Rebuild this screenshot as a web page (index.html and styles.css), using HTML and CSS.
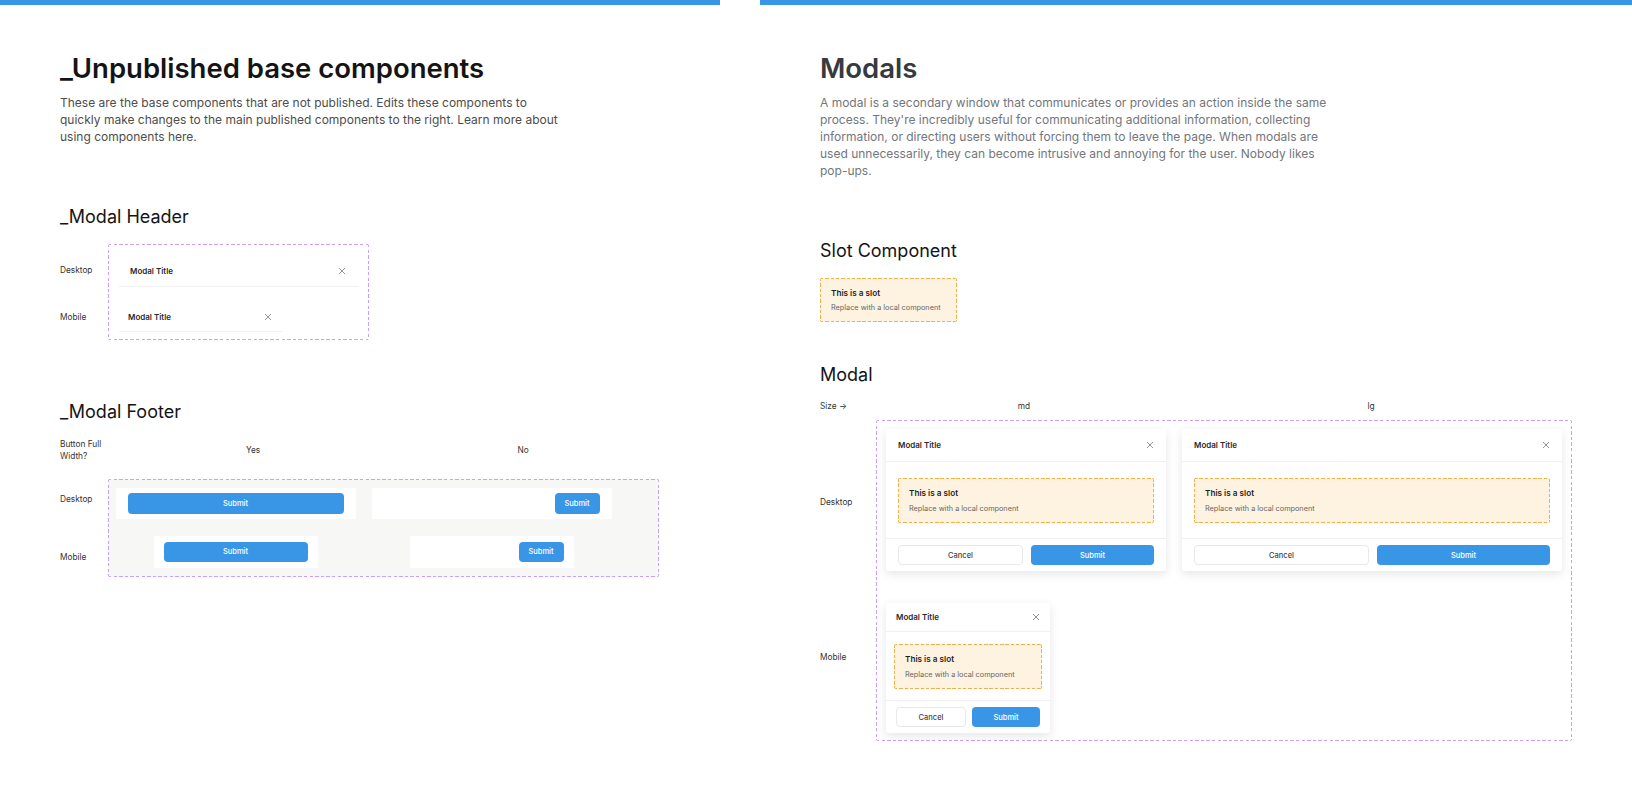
FILE: index.html
```html
<!DOCTYPE html>
<html>
<head>
    <title>Modals</title>
    <link rel="stylesheet" href="styles.css">
</head>
<body>
    <div class="panel panel-base">
        <div class="panel-body">
            <h1>_Unpublished base components</h1>
            <p class="intro">These are the base components that are not published. Edits these components to quickly make changes to the main published components to the right. Learn more about using components here.</p>

            <h2 class="header-heading">_Modal Header</h2>
            <div class="variant-row">
                <div class="labels header-labels">
                    <span>Desktop</span>
                    <span>Mobile</span>
                </div>
                <div class="variants header-variants">
                    <div class="base-header base-header-desktop">
                        <span class="modal-title">Modal Title</span>
                        <svg class="close" viewBox="0 0 8 8"><path d="M1 1l6 6M7 1l-6 6"/></svg>
                    </div>
                    <div class="base-header base-header-mobile">
                        <span class="modal-title">Modal Title</span>
                        <svg class="close" viewBox="0 0 8 8"><path d="M1 1l6 6M7 1l-6 6"/></svg>
                    </div>
                </div>
            </div>

            <h2 class="footer-heading">_Modal Footer</h2>
            <div class="footer-axis">
                <span class="axis-label">Button Full Width?</span>
                <span class="axis-yes">Yes</span>
                <span class="axis-no">No</span>
            </div>
            <div class="variant-row">
                <div class="labels footer-labels">
                    <span>Desktop</span>
                    <span>Mobile</span>
                </div>
                <div class="variants footer-variants">
                    <div class="footer-row">
                        <div class="base-footer base-footer-desktop"><button class="btn btn-primary btn-full">Submit</button></div>
                        <div class="base-footer base-footer-desktop"><button class="btn btn-primary btn-small">Submit</button></div>
                    </div>
                    <div class="footer-row footer-row-mobile">
                        <div class="base-footer base-footer-mobile"><button class="btn btn-primary btn-full">Submit</button></div>
                        <div class="base-footer base-footer-mobile"><button class="btn btn-primary btn-small">Submit</button></div>
                    </div>
                </div>
            </div>
        </div>
    </div>

    <div class="panel panel-modals">
        <div class="panel-body">
            <h1 class="muted-title">Modals</h1>
            <p class="intro intro-muted">A modal is a secondary window that communicates or provides an action inside the same process. They're incredibly useful for communicating additional information, collecting information, or directing users without forcing them to leave the page. When modals are used unnecessarily, they can become intrusive and annoying for the user. Nobody likes pop-ups.</p>

            <h2 class="slot-heading">Slot Component</h2>
            <div class="slot slot-standalone">
                <strong>This is a slot</strong>
                <span>Replace with a local component</span>
            </div>

            <h2 class="modal-heading">Modal</h2>
            <div class="size-axis">
                <span>Size →</span>
                <span class="size-md">md</span>
                <span class="size-lg">lg</span>
            </div>
            <div class="variant-row">
                <div class="labels modal-labels">
                    <span>Desktop</span>
                    <span>Mobile</span>
                </div>
                <div class="variants modal-variants">
                    <div class="modal-row">
                        <div class="modal modal-md">
                            <div class="modal-header">
                                <span class="modal-title">Modal Title</span>
                                <svg class="close" viewBox="0 0 8 8"><path d="M1 1l6 6M7 1l-6 6"/></svg>
                            </div>
                            <div class="modal-body">
                                <div class="slot">
                                    <strong>This is a slot</strong>
                                    <span>Replace with a local component</span>
                                </div>
                            </div>
                            <div class="modal-footer">
                                <button class="btn btn-outline">Cancel</button>
                                <button class="btn btn-primary">Submit</button>
                            </div>
                        </div>
                        <div class="modal modal-lg">
                            <div class="modal-header">
                                <span class="modal-title">Modal Title</span>
                                <svg class="close" viewBox="0 0 8 8"><path d="M1 1l6 6M7 1l-6 6"/></svg>
                            </div>
                            <div class="modal-body">
                                <div class="slot">
                                    <strong>This is a slot</strong>
                                    <span>Replace with a local component</span>
                                </div>
                            </div>
                            <div class="modal-footer">
                                <button class="btn btn-outline">Cancel</button>
                                <button class="btn btn-primary">Submit</button>
                            </div>
                        </div>
                    </div>
                    <div class="modal modal-mobile">
                        <div class="modal-header">
                            <span class="modal-title">Modal Title</span>
                            <svg class="close" viewBox="0 0 8 8"><path d="M1 1l6 6M7 1l-6 6"/></svg>
                        </div>
                        <div class="modal-body">
                            <div class="slot">
                                <strong>This is a slot</strong>
                                <span>Replace with a local component</span>
                            </div>
                        </div>
                        <div class="modal-footer">
                            <button class="btn btn-outline">Cancel</button>
                            <button class="btn btn-primary">Submit</button>
                        </div>
                    </div>
                </div>
            </div>
        </div>
    </div>
</body>
</html>
```

FILE: styles.css
```css
* {
    box-sizing: border-box;
}
html, body {
    height: 100%;
}
body {
    font-family: Inter, "Liberation Sans", sans-serif;
    margin: 0;
    background-color: #fff;
    color: #1a1a1a;
    display: flex;
    gap: 40px;
    overflow: hidden;
}
.panel {
    border-top: 5px solid #3996e6;
    height: 100%;
}
.panel-base {
    width: 720px;
}
.panel-modals {
    width: 872px;
}
.panel-body {
    padding: 46px 0 0 60px;
}
h1 {
    margin: 0;
    font-size: 27.5px;
    line-height: 34px;
    font-weight: 600;
    color: #141414;
}
.muted-title {
    color: #36393d;
}
.intro {
    margin: 9px 0 0;
    font-size: 12px;
    line-height: 17px;
    color: #4d4d4d;
    width: 510px;
}
.intro-muted {
    color: #73767c;
    width: 512px;
}
h2 {
    margin: 0;
    font-size: 18px;
    line-height: 22px;
    font-weight: 400;
    color: #141414;
}
.header-heading {
    margin-top: 61px;
    margin-bottom: 16px;
}
.footer-heading {
    margin-top: 61.5px;
    margin-bottom: 15px;
}
.slot-heading {
    margin-top: 60.5px;
    margin-bottom: 16.3px;
}
.modal-heading {
    margin-top: 41.5px;
    margin-bottom: 14.5px;
}

/* rows of variants */
.variant-row {
    display: flex;
}
.labels {
    display: flex;
    flex-direction: column;
    font-size: 8.3px;
    line-height: 12px;
    color: #333;
}
.header-labels {
    width: 48px;
    padding-top: 20px;
    gap: 35px;
}
.footer-labels {
    width: 48px;
    padding-top: 13.7px;
    gap: 46px;
}
.modal-labels {
    width: 56px;
    padding-top: 76.4px;
    gap: 143px;
}

/* figma style dashes, chrome's own dashed border is too short */
.variants, .slot {
    border: 1px solid transparent;
    border-radius: 2px;
    background-origin: border-box;
    background-image:
        repeating-linear-gradient(90deg, var(--dash) 0 var(--on), transparent var(--on) var(--period)),
        repeating-linear-gradient(90deg, var(--dash) 0 var(--on), transparent var(--on) var(--period)),
        repeating-linear-gradient(180deg, var(--dash) 0 var(--on), transparent var(--on) var(--period)),
        repeating-linear-gradient(180deg, var(--dash) 0 var(--on), transparent var(--on) var(--period));
    background-size: 100% 1px, 100% 1px, 1px 100%, 1px 100%;
    background-position: 0 0, 0 100%, 0 0, 100% 0;
    background-repeat: no-repeat;
}
.variants {
    --dash: #c9a0fc;
    --on: 3.4px;
    --period: 5.6px;
}
.header-variants {
    width: 260.5px;
    height: 95.5px;
    padding: 11px 0 0 9.5px;
}
.footer-variants {
    width: 550.5px;
    height: 97.4px;
    padding: 7.7px 0 0 6.5px;
    background-color: #f7f7f5;
}
.modal-variants {
    width: 695.7px;
    height: 321.4px;
    padding: 8.7px 0 0 9px;
}

/* base header */
.modal-title {
    font-size: 8px;
    font-weight: 600;
    color: #2a2a2a;
}
.close {
    width: 8px;
    height: 8px;
    flex: none;
}
.close path {
    fill: none;
    stroke: #74777c;
    stroke-width: 0.8;
}
.base-header {
    display: flex;
    justify-content: space-between;
    align-items: center;
    border-bottom: 1px solid #f1f1f1;
}
.base-header-desktop {
    width: 240px;
    height: 31px;
    padding: 0 12.4px 0 11.5px;
    margin-bottom: 16px;
}
.base-header-mobile {
    width: 163px;
    height: 29px;
    padding: 0 9.6px 0 9.5px;
}

/* base footer */
.footer-axis {
    display: grid;
    grid-template-columns: 48.5px 289px 251px;
    align-items: center;
    font-size: 8.3px;
    line-height: 12px;
    color: #333;
    margin-bottom: 17.3px;
}
.axis-yes, .axis-no {
    text-align: center;
}
.footer-row {
    display: flex;
    gap: 16px;
    margin-bottom: 17px;
}
.footer-row-mobile {
    margin-left: 38px;
    gap: 92px;
}
.base-footer {
    background-color: #fff;
    display: flex;
    justify-content: flex-end;
}
.base-footer-desktop {
    width: 240px;
    height: 31px;
    padding: 5px 12px;
}
.base-footer-mobile {
    width: 164px;
    height: 31.7px;
    padding: 6px 10px;
}

/* buttons */
.btn {
    font-family: inherit;
    font-size: 7.5px;
    font-weight: 500;
    height: 20px;
    padding: 0;
    border-radius: 4px;
    cursor: pointer;
}
.btn-primary {
    background-color: #3996e6;
    border: none;
    color: #fff;
}
.btn-outline {
    background-color: #fff;
    border: 1px solid #e8e8e8;
    color: #444;
}
.btn-full {
    width: 100%;
}
.btn-small {
    width: 45px;
}
.base-footer-desktop .btn {
    height: 20.7px;
}

/* slot */
.slot {
    --dash: #f0b04a;
    --on: 3.5px;
    --period: 5.3px;
    display: flex;
    flex-direction: column;
    gap: 3.7px;
    height: 45.4px;
    padding: 8px 10px 0;
    background-color: #fef3e0;
    line-height: 12px;
}
.slot strong {
    font-size: 8.2px;
    font-weight: 600;
    color: #1f1f1f;
}
.slot span {
    font-size: 7.3px;
    color: #666;
}
.slot-standalone {
    width: 136.5px;
    height: 44.5px;
}

/* modals */
.size-axis {
    display: grid;
    grid-template-columns: 66px 276px 418px;
    font-size: 8.3px;
    line-height: 12px;
    color: #333;
    margin-bottom: 7.3px;
}
.size-md, .size-lg {
    text-align: center;
}
.modal-row {
    display: flex;
    gap: 16px;
    margin-bottom: 32px;
}
.modal {
    background-color: #fff;
    border-radius: 2px;
    box-shadow: 0 3px 10px rgba(40, 50, 60, 0.12);
}
.modal-md {
    width: 280px;
    height: 142px;
}
.modal-lg {
    width: 380px;
    height: 142px;
}
.modal-mobile {
    width: 164px;
    height: 130px;
}
.modal .slot {
    gap: 4.2px;
}
.modal-header {
    display: flex;
    justify-content: space-between;
    align-items: center;
    height: 32.8px;
    padding: 0 12px;
    border-bottom: 1px solid #f1f1f1;
}
.modal-body {
    padding: 15.5px 12px;
}
.modal-footer {
    display: flex;
    gap: 8px;
    padding: 5.8px 12px 0;
    border-top: 1px solid #f1f1f1;
}
.modal-footer .btn {
    flex: 1;
}
.modal-mobile .modal-header {
    height: 28.8px;
    padding: 0 10px;
}
.modal-mobile .modal-body {
    padding: 11.5px 8px 11.5px;
}
.modal-mobile .modal-footer {
    gap: 6px;
    padding: 5.8px 10px 0;
}
```
